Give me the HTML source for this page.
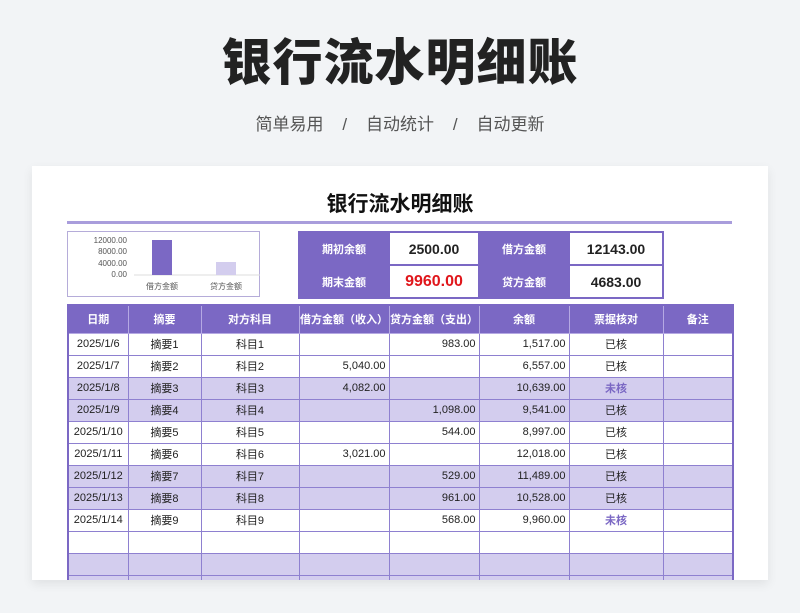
<!DOCTYPE html>
<html><head><meta charset="utf-8"><style>
*{margin:0;padding:0;box-sizing:border-box}
body{width:800px;height:613px;background:#f2f4f6;font-family:"Liberation Sans","Noto Sans CJK SC",sans-serif;position:relative;overflow:hidden;color:#222}
.h1{position:absolute;top:30px;left:0;width:800px;text-align:center;font-size:50px;font-weight:900;color:#222;line-height:66px;letter-spacing:1px}
.sub{position:absolute;top:112px;left:0;width:800px;text-align:center;font-size:17px;color:#555;line-height:26px;word-spacing:0}
.card{position:absolute;left:32px;top:166px;width:736px;height:414px;background:#fff;box-shadow:0 4px 10px rgba(0,0,0,0.08);overflow:hidden}
.ct{position:absolute;top:22px;left:0;width:736px;text-align:center;font-size:21px;font-weight:bold;color:#111}
.line{position:absolute;left:35px;top:55px;width:665px;height:3px;background:#a99ddc}
.chart{position:absolute;left:35px;top:65px;width:193px;height:66px;border:1px solid #b5acd9}
.sum{position:absolute;left:266px;top:65px;border-collapse:collapse}
.sum td{border:2px solid #7b68c4;height:33px;text-align:center;font-size:14px;font-weight:bold}
.sum .l{background:#7b68c4;color:#fff;font-size:11px;width:90px}
.sum .v{width:90px;background:#fff}
table.t{position:absolute;left:35px;top:138px;border-collapse:collapse;border:2px solid #7b68c4}
.t th{background:#7b68c4;color:#fff;font-size:11px;font-weight:bold;height:28px;border:1px solid #b5a9e3}
.t td{height:22px;border:1px solid #8e80d0;font-size:11px;text-align:center;padding:0 3px}
.t td.r{text-align:right}
.t tr.p td{background:#d3cdee}
.n{color:#7b68c4;font-weight:bold}
</style></head><body>
<div class="h1">银行流水明细账</div>
<div class="sub">简单易用&nbsp;&nbsp;&nbsp;&nbsp;/&nbsp;&nbsp;&nbsp;&nbsp;自动统计&nbsp;&nbsp;&nbsp;&nbsp;/&nbsp;&nbsp;&nbsp;&nbsp;自动更新</div>
<div class="card">
<div class="ct">银行流水明细账</div>
<div class="line"></div>
<div class="chart">
<svg width="193" height="66" style="position:absolute;left:0;top:0">
<g font-size="8" fill="#555" text-anchor="end" font-family="Liberation Sans,sans-serif">
<text x="59" y="11">12000.00</text><text x="59" y="22">8000.00</text><text x="59" y="34">4000.00</text><text x="59" y="45">0.00</text></g>
<line x1="66" y1="43" x2="192" y2="43" stroke="#ddd"/>
<rect x="84" y="8" width="20" height="35" fill="#7b68c4"/>
<rect x="148" y="30" width="20" height="13" fill="#d3cdee"/>
<g font-size="8" fill="#555" text-anchor="middle" font-family="Liberation Sans,Noto Sans CJK SC,sans-serif"><text x="94" y="57">借方金额</text><text x="158" y="57">贷方金额</text></g>
</svg></div>
<table class="sum">
<tr><td class="l">期初余额</td><td class="v">2500.00</td><td class="l">借方金额</td><td class="v" style="width:94px">12143.00</td></tr>
<tr><td class="l">期末金额</td><td class="v" style="color:#e0161b;font-size:16px">9960.00</td><td class="l">贷方金额</td><td class="v">4683.00</td></tr>
</table>
<table class="t">
<tr><th style="width:60px">日期</th><th style="width:73px">摘要</th><th style="width:98px">对方科目</th><th style="width:90px">借方金额（收入）</th><th style="width:90px">贷方金额（支出）</th><th style="width:90px">余额</th><th style="width:94px">票据核对</th><th style="width:70px">备注</th></tr>
<tr><td>2025/1/6</td><td>摘要1</td><td>科目1</td><td></td><td class="r">983.00</td><td class="r">1,517.00</td><td>已核</td><td></td></tr>
<tr><td>2025/1/7</td><td>摘要2</td><td>科目2</td><td class="r">5,040.00</td><td></td><td class="r">6,557.00</td><td>已核</td><td></td></tr>
<tr class="p"><td>2025/1/8</td><td>摘要3</td><td>科目3</td><td class="r">4,082.00</td><td></td><td class="r">10,639.00</td><td class="n">未核</td><td></td></tr>
<tr class="p"><td>2025/1/9</td><td>摘要4</td><td>科目4</td><td></td><td class="r">1,098.00</td><td class="r">9,541.00</td><td>已核</td><td></td></tr>
<tr><td>2025/1/10</td><td>摘要5</td><td>科目5</td><td></td><td class="r">544.00</td><td class="r">8,997.00</td><td>已核</td><td></td></tr>
<tr><td>2025/1/11</td><td>摘要6</td><td>科目6</td><td class="r">3,021.00</td><td></td><td class="r">12,018.00</td><td>已核</td><td></td></tr>
<tr class="p"><td>2025/1/12</td><td>摘要7</td><td>科目7</td><td></td><td class="r">529.00</td><td class="r">11,489.00</td><td>已核</td><td></td></tr>
<tr class="p"><td>2025/1/13</td><td>摘要8</td><td>科目8</td><td></td><td class="r">961.00</td><td class="r">10,528.00</td><td>已核</td><td></td></tr>
<tr><td>2025/1/14</td><td>摘要9</td><td>科目9</td><td></td><td class="r">568.00</td><td class="r">9,960.00</td><td class="n">未核</td><td></td></tr>
<tr><td></td><td></td><td></td><td></td><td></td><td></td><td></td><td></td></tr>
<tr class="p"><td></td><td></td><td></td><td></td><td></td><td></td><td></td><td></td></tr>
<tr class="p"><td></td><td></td><td></td><td></td><td></td><td></td><td></td><td></td></tr>
</table>
</div>
</body></html>
